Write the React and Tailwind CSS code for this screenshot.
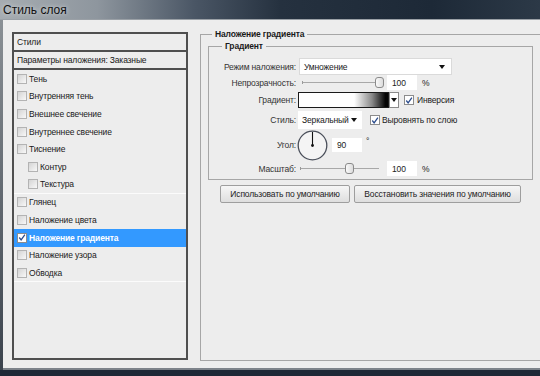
import React from 'react';

const styleItems = [
  { label: 'Тень' },
  { label: 'Внутренняя тень' },
  { label: 'Внешнее свечение' },
  { label: 'Внутреннее свечение' },
  { label: 'Тиснение' },
  { label: 'Контур', sub: true },
  { label: 'Текстура', sub: true, divider: true },
  { label: 'Глянец' },
  { label: 'Наложение цвета' },
  { label: 'Наложение градиента', active: true },
  { label: 'Наложение узора' },
  { label: 'Обводка', divider: true },
];

const CheckBox = ({ checked, white }) => (
  <span
    className={`flex h-[10px] w-[10px] shrink-0 items-center justify-center border ${
      white ? 'border-[#8c8c8c] bg-white' : 'border-[#b3b3b3] bg-[linear-gradient(135deg,#d4d4d4,#f8f8f8)]'
    }`}
  >
    {checked && (
      <svg viewBox="0 0 10 10" className="h-[9px] w-[9px]">
        <path d="M1.6 5 L3.9 7.9 L8.6 1.4" fill="none" stroke="#2b4c8c" strokeWidth="1.6" />
      </svg>
    )}
  </span>
);

const Arrow = () => (
  <span className="h-0 w-0 border-x-[3.5px] border-t-[4px] border-x-transparent border-t-[#111]" />
);

const Thumb = () => (
  <span className="h-[11px] w-[9px] shrink-0 rounded-[3px] border border-[#8a8a8a] bg-[linear-gradient(90deg,#fafafa,#dcdcdc)]" />
);

const Field = ({ value, h = 'h-[15px]' }) => (
  <span className={`flex w-[30px] ${h} shrink-0 items-center bg-white pl-[5px] text-[#222]`}>{value}</span>
);

const Label = ({ children }) => (
  <span className="w-[87px] shrink-0 whitespace-nowrap text-right text-[#333]">{children}</span>
);

export default function App() {
  return (
    <div className="flex h-[376px] w-[540px] flex-col overflow-hidden bg-[#1f2a38] font-['Liberation_Sans',Arial,sans-serif] text-[8.5px] leading-[12px] tracking-[-0.15px] text-[#1a1a1a]">
      {/* заголовок окна */}
      <div className="flex h-[19px] shrink-0 items-center bg-[linear-gradient(90deg,#a6acb1_0%,#8e969e_18%,#4a5665_36%,#25313f_52%,#1d2937_80%,#2c3947_100%)] pl-[3px]">
        <span className="text-[12px] tracking-normal text-[#101010] [text-shadow:0_0_4px_#dfe3e6]">Стиль слоя</span>
      </div>
      <div className="h-px shrink-0 bg-[#9aa0a6]" />

      {/* тело диалога */}
      <div className="flex min-h-0 flex-1">
        <div className="w-[3px] shrink-0 bg-[linear-gradient(180deg,#8a9095,#3b434d)]" />
        <div className="flex flex-1 items-start border-b-2 border-[#7d838a] bg-[#ededed]">
          {/* список стилей */}
          <div className="ml-[9px] mt-[12px] flex h-[328px] w-[176px] shrink-0 flex-col border-2 border-[#4f4f4f] bg-[#ededed]">
            <div className="flex h-[18px] shrink-0 items-center border-b-2 border-[#4f4f4f] pl-[3px]">Стили</div>
            <div className="flex h-[18px] shrink-0 items-center border-b-2 border-[#4f4f4f] pl-[3px]">
              Параметры наложения: Заказные
            </div>
            {styleItems.map((item) => (
              <div
                key={item.label}
                className={`flex h-[17.67px] shrink-0 items-center ${item.sub ? 'pl-[14px]' : 'pl-[3px]'} ${
                  item.active ? 'bg-[#3399ff] font-bold text-white' : ''
                } ${item.divider ? 'border-b border-[#fbfbfb]' : ''}`}
              >
                <CheckBox checked={item.active} white={item.active} />
                <span className="ml-[2px]">{item.label}</span>
              </div>
            ))}
          </div>

          {/* наложение градиента */}
          <fieldset className="ml-[12px] mt-[8px] h-[333px] w-[360px] shrink-0 border border-[#a6a6a6] pl-[7px]">
            <legend className="ml-[4px] px-[3px] font-bold leading-[12px]">Наложение градиента</legend>

            <fieldset className="w-[325px] border border-[#a6a6a6] pb-[3px] pt-[6px]">
              <legend className="ml-[13px] px-[3px] font-bold leading-[12px]">Градиент</legend>

              <div className="flex h-[17px] items-center">
                <Label>Режим наложения:</Label>
                <span className="ml-[3px] flex h-[17px] w-[153px] items-center justify-between border border-[#dadada] bg-white pl-[4px] pr-[6px]">
                  <span>Умножение</span>
                  <Arrow />
                </span>
              </div>

              <div className="flex h-[15px] items-center">
                <Label>Непрозрачность:</Label>
                <span className="ml-[6px] h-[3px] w-px bg-[#9a9a9a]" />
                <span className="h-px w-[72px] bg-[#a8a8a8]" />
                <Thumb />
                <span className="ml-[3px]" />
                <Field value="100" />
                <span className="ml-[5px]">%</span>
              </div>

              <div className="mt-[2px] flex h-[16px] items-center">
                <Label>Градиент:</Label>
                <span className="ml-[2px] h-[16px] w-[91px] border border-[#1a1a1a] bg-[linear-gradient(90deg,#fff_0%,#fff_62%,#8a8a8a_82%,#050505_97%)]" />
                <span className="flex h-[16px] w-[10px] items-center justify-center border border-[#8a8a8a] bg-white">
                  <Arrow />
                </span>
                <span className="ml-[5px]" />
                <CheckBox checked white />
                <span className="ml-[3px]">Инверсия</span>
              </div>

              <div className="mt-[3px] flex h-[18px] items-center">
                <Label>Стиль:</Label>
                <span className="ml-[2px] flex h-[18px] w-[64px] items-center justify-between bg-white pl-[4px] pr-[5px]">
                  <span>Зеркальный</span>
                  <Arrow />
                </span>
                <span className="ml-[8px]" />
                <CheckBox checked white />
                <span className="ml-[2px]">Выровнять по слою</span>
              </div>

              <div className="mt-px flex h-[30px] items-center">
                <Label>Угол:</Label>
                <svg viewBox="0 0 31 31" className="ml-px h-[31px] w-[31px] shrink-0">
                  <circle cx="15.5" cy="15.5" r="14.3" fill="#f4f4f4" stroke="#4a4f5a" strokeWidth="1.3" />
                  <line x1="15.5" y1="15.5" x2="15.5" y2="2" stroke="#111" strokeWidth="1.1" />
                  <circle cx="15.5" cy="15.5" r="1.4" fill="#111" />
                </svg>
                <span className="ml-[4px]" />
                <Field value="90" h="h-[14px]" />
                <span className="ml-[4px] mt-[5px] self-start">°</span>
              </div>

              <div className="mt-px flex h-[15px] items-center">
                <Label>Масштаб:</Label>
                <span className="ml-[4px] h-[3px] w-px bg-[#9a9a9a]" />
                <span className="h-px w-[44px] bg-[#a8a8a8]" />
                <Thumb />
                <span className="h-px w-[25px] bg-[#a8a8a8]" />
                <span className="ml-[8px]" />
                <Field value="100" />
                <span className="ml-[5px]">%</span>
              </div>
            </fieldset>

            <div className="ml-[12px] mt-[5px] flex gap-[4px]">
              <button className="flex h-[18px] w-[130px] items-center justify-center whitespace-nowrap rounded-[2px] border border-[#9e9e9e] bg-[linear-gradient(180deg,#f6f6f6,#dedede)] text-[#222]">
                Использовать по умолчанию
              </button>
              <button className="flex h-[18px] w-[167px] items-center justify-center whitespace-nowrap rounded-[2px] border border-[#9e9e9e] bg-[linear-gradient(180deg,#f6f6f6,#dedede)] text-[#222]">
                Восстановить значения по умолчанию
              </button>
            </div>
          </fieldset>
        </div>
      </div>
      <div className="h-[6px] shrink-0 bg-[#1e2836]" />
    </div>
  );
}
